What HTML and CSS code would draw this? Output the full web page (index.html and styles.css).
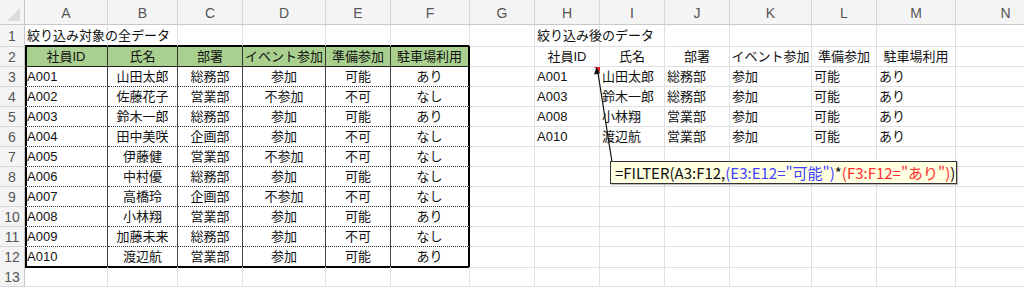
FILE: index.html
```html
<!DOCTYPE html>
<html lang="ja">
<head>
<meta charset="utf-8">
<link rel="stylesheet" href="styles.css">
</head>
<body>
<div class="sheet">
  <div class="row hdr">
    <div class="corner"><svg width="24" height="24" viewBox="0 0 24 24"><polygon points="20,8 20,21 7,21" fill="#dcdcdc"/></svg></div>
    <div class="ch">A</div><div class="ch">B</div><div class="ch">C</div><div class="ch">D</div><div class="ch">E</div><div class="ch">F</div><div class="ch">G</div><div class="ch">H</div><div class="ch">I</div><div class="ch">J</div><div class="ch">K</div><div class="ch">L</div><div class="ch">M</div><div class="ch">N</div>
  </div>

  <div class="row r1">
    <div class="rh">1</div>
    <div class="c l ov tb">絞り込み対象の全データ</div><div class="c tb"></div><div class="c tb"></div><div class="c tb"></div><div class="c tb"></div><div class="c tb"></div>
    <div class="c"></div>
    <div class="c l ov">絞り込み後のデータ</div><div class="c"></div><div class="c"></div><div class="c"></div><div class="c"></div><div class="c"></div><div class="c"></div>
  </div>

  <div class="row">
    <div class="rh">2</div>
    <div class="c th fa">社員ID</div><div class="c th">氏名</div><div class="c th">部署</div><div class="c th">イベント参加</div><div class="c th">準備参加</div><div class="c th ff">駐車場利用</div>
    <div class="c"></div>
    <div class="c">社員ID</div><div class="c">氏名</div><div class="c">部署</div><div class="c">イベント参加</div><div class="c">準備参加</div><div class="c">駐車場利用</div><div class="c"></div>
  </div>

  <div class="row">
    <div class="rh">3</div>
    <div class="c t fa l">A001</div><div class="c t">山田太郎</div><div class="c t">総務部</div><div class="c t">参加</div><div class="c t">可能</div><div class="c t ff">あり</div>
    <div class="c"></div>
    <div class="c l">A001</div><div class="c l">山田太郎</div><div class="c l">総務部</div><div class="c l">参加</div><div class="c l">可能</div><div class="c l">あり</div><div class="c"></div>
  </div>

  <div class="row">
    <div class="rh">4</div>
    <div class="c t fa l">A002</div><div class="c t">佐藤花子</div><div class="c t">営業部</div><div class="c t">不参加</div><div class="c t">不可</div><div class="c t ff">なし</div>
    <div class="c"></div>
    <div class="c l">A003</div><div class="c l">鈴木一郎</div><div class="c l">総務部</div><div class="c l">参加</div><div class="c l">可能</div><div class="c l">あり</div><div class="c"></div>
  </div>

  <div class="row">
    <div class="rh">5</div>
    <div class="c t fa l">A003</div><div class="c t">鈴木一郎</div><div class="c t">総務部</div><div class="c t">参加</div><div class="c t">可能</div><div class="c t ff">あり</div>
    <div class="c"></div>
    <div class="c l">A008</div><div class="c l">小林翔</div><div class="c l">営業部</div><div class="c l">参加</div><div class="c l">可能</div><div class="c l">あり</div><div class="c"></div>
  </div>

  <div class="row">
    <div class="rh">6</div>
    <div class="c t fa l">A004</div><div class="c t">田中美咲</div><div class="c t">企画部</div><div class="c t">参加</div><div class="c t">不可</div><div class="c t ff">なし</div>
    <div class="c"></div>
    <div class="c l">A010</div><div class="c l">渡辺航</div><div class="c l">営業部</div><div class="c l">参加</div><div class="c l">可能</div><div class="c l">あり</div><div class="c"></div>
  </div>

  <div class="row">
    <div class="rh">7</div>
    <div class="c t fa l">A005</div><div class="c t">伊藤健</div><div class="c t">営業部</div><div class="c t">不参加</div><div class="c t">不可</div><div class="c t ff">なし</div>
    <div class="c"></div>
    <div class="c"></div><div class="c"></div><div class="c"></div><div class="c"></div><div class="c"></div><div class="c"></div><div class="c"></div>
  </div>

  <div class="row">
    <div class="rh">8</div>
    <div class="c t fa l">A006</div><div class="c t">中村優</div><div class="c t">総務部</div><div class="c t">参加</div><div class="c t">可能</div><div class="c t ff">なし</div>
    <div class="c"></div>
    <div class="c"></div><div class="c"></div><div class="c"></div><div class="c"></div><div class="c"></div><div class="c"></div><div class="c"></div>
  </div>

  <div class="row">
    <div class="rh">9</div>
    <div class="c t fa l">A007</div><div class="c t">高橋玲</div><div class="c t">企画部</div><div class="c t">不参加</div><div class="c t">不可</div><div class="c t ff">なし</div>
    <div class="c"></div>
    <div class="c"></div><div class="c"></div><div class="c"></div><div class="c"></div><div class="c"></div><div class="c"></div><div class="c"></div>
  </div>

  <div class="row">
    <div class="rh">10</div>
    <div class="c t fa l">A008</div><div class="c t">小林翔</div><div class="c t">営業部</div><div class="c t">参加</div><div class="c t">可能</div><div class="c t ff">あり</div>
    <div class="c"></div>
    <div class="c"></div><div class="c"></div><div class="c"></div><div class="c"></div><div class="c"></div><div class="c"></div><div class="c"></div>
  </div>

  <div class="row">
    <div class="rh">11</div>
    <div class="c t fa l">A009</div><div class="c t">加藤未来</div><div class="c t">総務部</div><div class="c t">参加</div><div class="c t">不可</div><div class="c t ff">なし</div>
    <div class="c"></div>
    <div class="c"></div><div class="c"></div><div class="c"></div><div class="c"></div><div class="c"></div><div class="c"></div><div class="c"></div>
  </div>

  <div class="row">
    <div class="rh">12</div>
    <div class="c t fa fb l">A010</div><div class="c t fb">渡辺航</div><div class="c t fb">営業部</div><div class="c t fb">参加</div><div class="c t fb">可能</div><div class="c t fb ff">あり</div>
    <div class="c"></div>
    <div class="c"></div><div class="c"></div><div class="c"></div><div class="c"></div><div class="c"></div><div class="c"></div><div class="c"></div>
  </div>

  <div class="row">
    <div class="rh">13</div>
    <div class="c"></div><div class="c"></div><div class="c"></div><div class="c"></div><div class="c"></div><div class="c"></div>
    <div class="c"></div>
    <div class="c"></div><div class="c"></div><div class="c"></div><div class="c"></div><div class="c"></div><div class="c"></div><div class="c"></div>
  </div>

  <svg class="arrow" width="30" height="100" viewBox="0 0 30 100">
    <polygon points="4,1 10,1 10,6" fill="#e8242b"/>
    <line x1="7.5" y1="4" x2="22" y2="96" stroke="#111" stroke-width="1.2"/>
    <polygon points="6.5,1 4,8.5 10,7.6" fill="#111"/>
  </svg>

  <div class="tip">=FILTER(A3:F12,<span class="blue">(E3:E12="可能")</span>*<span class="red">(F3:F12="あり")</span>)</div>
</div>
</body>
</html>
```

FILE: styles.css
```css
html, body {
  margin: 0;
  padding: 0;
  background: #ffffff;
}

body {
  width: 1024px;
  height: 290px;
  overflow: hidden;
  font-family: "Liberation Sans", "Noto Sans CJK JP", sans-serif;
  font-size: 13px;
  color: #111;
}

.sheet {
  position: relative;
  width: 1024px;
}

.row {
  display: grid;
  grid-template-columns: 25px 83px 70px 65px 83px 65px 79px 65px 65px 65px 65px 82px 65px 79px 100px;
  height: 20px;
}

.row.hdr {
  height: 25px;
}

.row.r1 {
  height: 22px;
}

.corner,
.ch,
.rh {
  box-sizing: border-box;
  background: #f4f4f4;
  color: #555;
  border-right: 1px solid #d6d6d6;
  border-bottom: 1px solid #d6d6d6;
  font-family: "Liberation Sans", "Noto Sans CJK JP", sans-serif;
  font-size: 14px;
  display: flex;
  align-items: center;
  justify-content: center;
}

.corner {
  background: #f4f4f4;
  border-right: 1px solid #c8c8c8;
  border-bottom: 1px solid #c8c8c8;
}

.corner svg {
  display: block;
}

.ch {
  border-bottom-color: #c8c8c8;
  padding-top: 1px;
}

.rh {
  border-right-color: #c8c8c8;
  font-size: 14px;
}

.c {
  box-sizing: border-box;
  border-right: 1px solid #e0e0e0;
  border-bottom: 1px solid #e0e0e0;
  display: flex;
  align-items: center;
  justify-content: center;
  white-space: nowrap;
  line-height: 18px;
  padding-top: 1px;
  min-width: 0;
}

.c.l {
  justify-content: flex-start;
  padding-left: 2px;
}

.c.ov {
  overflow: visible;
  position: relative;
  z-index: 1;
}

.c.tb {
  border-bottom: 2px solid #000;
}

.c.th {
  background: #a9d08e;
  border-right: 1px solid #333;
  border-bottom: 1px solid #222;
}

.c.t {
  border-right: 1px solid #444;
  border-bottom: 1px dotted #333;
}

.c.fa {
  box-shadow: inset 2px 0 0 #000;
}

.c.ff {
  border-right: 2px solid #000;
}

.c.fb {
  border-bottom: 2px solid #000;
}

.arrow {
  position: absolute;
  left: 590px;
  top: 66px;
}

.tip {
  position: absolute;
  left: 610px;
  top: 161px;
  width: 347px;
  height: 23px;
  box-sizing: border-box;
  background: #ffffe1;
  border: 1px solid #333;
  box-shadow: 1px 1px 1px rgba(0, 0, 0, 0.25);
  font-family: "Noto Sans CJK JP", sans-serif;
  font-size: 15px;
  line-height: 21px;
  padding-left: 4px;
  white-space: nowrap;
  color: #111;
}

.tip .blue {
  color: #3f3fff;
}

.tip .red {
  color: #ff3030;
}
```
